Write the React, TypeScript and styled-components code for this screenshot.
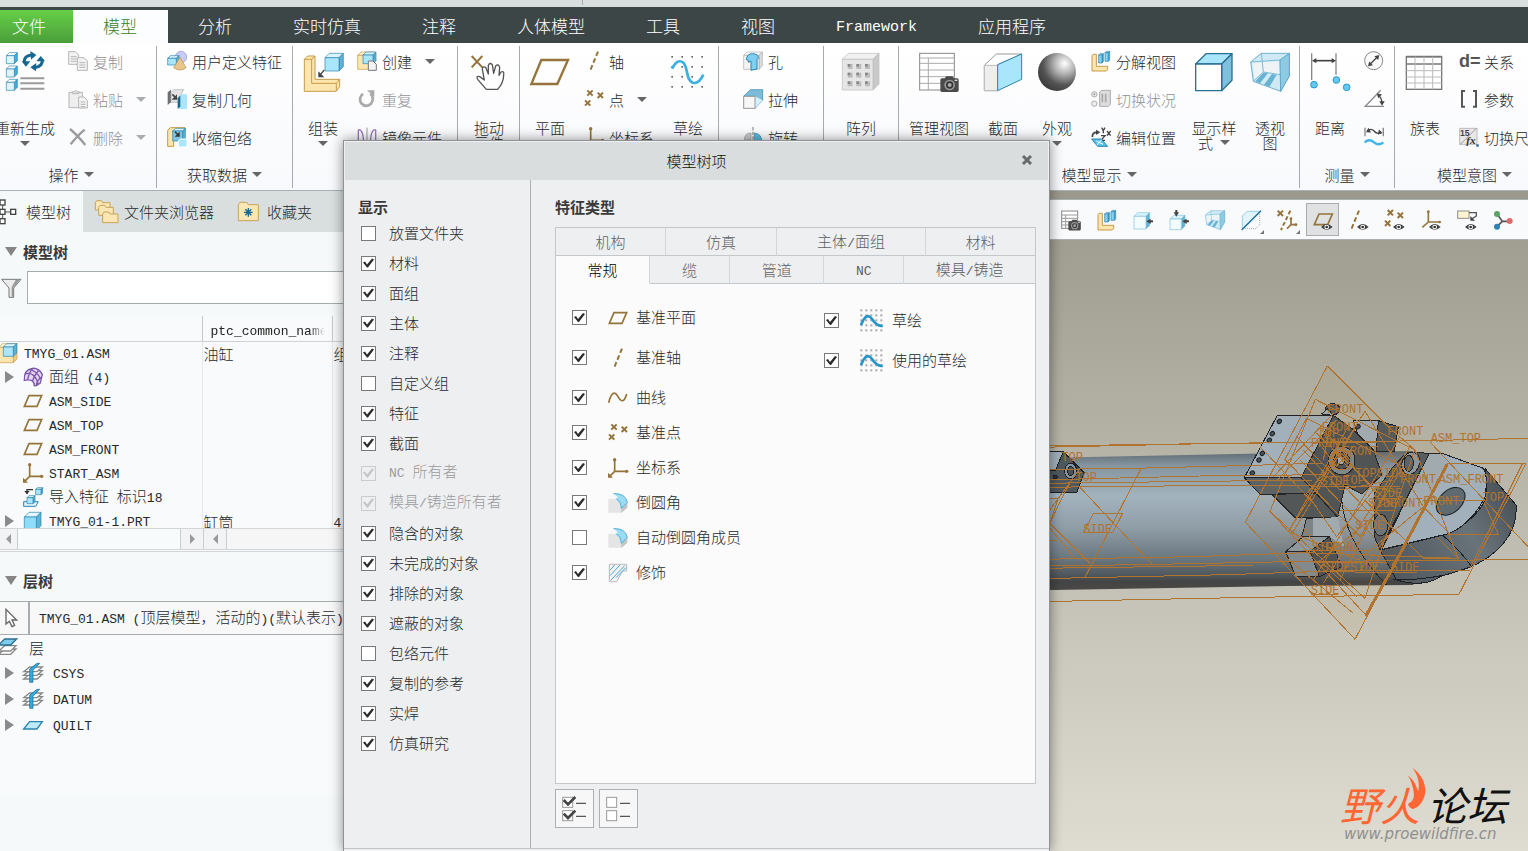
import React from 'react';
import styled, { createGlobalStyle, css } from 'styled-components';

const GlobalStyle = createGlobalStyle`
  *, *::before, *::after { box-sizing: border-box; }
  body { margin: 0; }
  body, button, input {
    font-family: 'Noto Sans CJK SC', sans-serif;
    font-size: 15px;
    font-weight: 300;
    line-height: 15px;
    color: #26292b;
  }
  button { margin: 0; padding: 0; border: 0; background: none; text-align: left; }
  h2, h3 { margin: 0; font-size: 15px; font-weight: 700; color: #3a3a3a; }
  svg { display: block; flex: none; }
`;

/* ---------- text ---------- */

const Latin = styled.span`
  font-family: 'Liberation Mono', monospace;
  font-size: 13px;
  white-space: pre;
`;

const Txt = ({ children }: { children: string }) => (
  <>
    {children.split(/([\x20-\x7e]+)/).map((part, i) =>
      i % 2 ? <Latin key={i}>{part}</Latin> : part
    )}
  </>
);

/* ---------- icons ---------- */

const TAN = '#fce6ad';
const TAN_D = '#c79a4b';
const BLUE = '#a9e6fb';
const BLUE_D = '#2b84ae';
const BROWN = '#94743a';

type BoxProps = {
  x: number; y: number; w: number; h: number; d: number;
  front?: string; top?: string; side?: string; stroke?: string; sw?: number;
};
const Box3 = ({ x, y, w, h, d, front = BLUE, top = '#d9f4fd', side = '#5fb2d6', stroke = BLUE_D, sw = 2 }: BoxProps) => (
  <g stroke={stroke} strokeWidth={sw} strokeLinejoin="round">
    <path d={`M${x} ${y + d}l${d} ${-d}h${w}l${-d} ${d}z`} fill={top} />
    <path d={`M${x + w} ${y + d}l${d} ${-d}v${h}l${-d} ${d}z`} fill={side} />
    <rect x={x} y={y + d} width={w} height={h} fill={front} />
  </g>
);

const Eye = () => (
  <g>
    <path d="M24 51Q41 33 59 51Q41 68 24 51Z" fill="#444" />
    <circle cx="41" cy="51" r="7" fill="#fff" />
    <circle cx="41" cy="51" r="4" fill="#333" />
  </g>
);
const Cross = ({ x, y, s = 8 }: { x: number; y: number; s?: number }) => (
  <path d={`M${x - s} ${y - s}l${2 * s} ${2 * s}M${x + s} ${y - s}l${-2 * s} ${2 * s}`} stroke={BROWN} strokeWidth="6" fill="none" />
);
const Page = ({ x, y, w = 30, h = 38, c = '#b5b5b5', lines = true }: { x: number; y: number; w?: number; h?: number; c?: string; lines?: boolean }) => (
  <g stroke={c} strokeWidth="3" fill="#f3f3f3">
    <path d={`M${x} ${y}h${w - 10}l10 10v${h - 10}h${-w}z`} />
    {lines && <path d={`M${x + 6} ${y + 15}h${w - 12}M${x + 6} ${y + 22}h${w - 12}M${x + 6} ${y + 29}h${w - 12}`} />}
  </g>
);
const Camera = ({ x, y, k = 1 }: { x: number; y: number; k?: number }) => (
  <g transform={`translate(${x} ${y}) scale(${k})`}>
    <path d="M0 10q0-5 5-5h8l5-6h18l5 6h9q5 0 5 5v31q0 5-5 5h-45q-5 0-5-5z" fill="#4a4a4a" />
    <circle cx="28" cy="25" r="16" fill="#999" />
    <circle cx="28" cy="25" r="11" fill="#333" />
    <circle cx="28" cy="25" r="6" fill="#aaa" />
    <path d="M43 11h8" stroke="#ddd" strokeWidth="4" />
  </g>
);
const ArrowHead = ({ x, y, r }: { x: number; y: number; r: number }) => (
  <path d="M0 0L-13 -8V8Z" fill="#444" transform={`translate(${x} ${y}) rotate(${r})`} />
);
const dots = (x0: number, y0: number, step: number, n: number, s: number, c: string) => (
  <g fill={c}>
    {Array.from({ length: n * n }, (_, k) => (
      <rect key={k} x={x0 + (k % n) * step} y={y0 + Math.floor(k / n) * step} width={s} height={s} />
    ))}
  </g>
);

const glyphs = {
  regen: (
    <>
      {[2, 42, 82].map((y) => <Box3 key={y} x={4} y={y} w={24} h={24} d={9} front="#dff5fd" top="#fff" side="#3faede" />)}
      <path d="M58 33Q56 10 82 8" fill="none" stroke="#17678f" strokeWidth="9" />
      <path d="M50 28h26l-13 16zM76 -3l18 12l-16 14z" fill="#17678f" />
      <path d="M112 22Q114 44 88 47" fill="none" stroke="#17678f" strokeWidth="9" />
      <path d="M94 28h26l-13-16zM94 33l-18 13l17 12z" fill="#17678f" />
      <path d="M46 79h72M46 94h72M46 110h72" stroke="#9a9a9a" strokeWidth="6" />
    </>
  ),
  copy: <><Page x={2} y={2} /><Page x={28} y={20} /></>,
  paste: (
    <>
      <path d="M3 10h40v46H3z" fill="#eee" stroke="#b5b5b5" strokeWidth="3" />
      <path d="M13 14V8h6q4-8 8 0h6v6z" fill="#ddd" stroke="#aaa" strokeWidth="2" />
      <Page x={32} y={24} w={26} h={33} />
    </>
  ),
  del: <path d="M6 6q22 18 46 48M50 8Q30 24 8 52" stroke="#9b9b9b" strokeWidth="7" fill="none" />,
  udf: (
    <>
      <circle cx="42" cy="18" r="17" fill="#c9cdf3" stroke="#8b8fd0" strokeWidth="2" />
      <Box3 x={2} y={14} w={26} h={20} d={8} />
      <path d="M39 19L57 50Q40 64 20 50Z" fill="#e9c68c" stroke="#b58a45" strokeWidth="2" />
    </>
  ),
  copygeom: (
    <>
      <path d="M2 10l10-8v38l-10 8z" fill="#6b7074" />
      <path d="M12 10l8-8h30l-6 10v28H12z" fill="#e4e4e4" stroke="#aaa" strokeWidth="2" />
      <path d="M16 16l12 12" stroke="#444" strokeWidth="5" /><path d="M30 16v16H14z" fill="#444" />
      <path d="M34 24l8-8h18v44H34z" fill={BLUE} /><path d="M32 28l8-9v34l-8 6z" fill="#17678f" />
    </>
  ),
  shrink: (
    <>
      <path d="M2 10l8-8h44v12H20v44H2z" fill={TAN} stroke={TAN_D} strokeWidth="3" />
      <Box3 x={17} y={4} w={30} h={30} d={8} front="#7fc4e2" />
      <path d="M24 14l12 12" stroke="#333" strokeWidth="4" /><path d="M38 14v15H23z" fill="#333" />
      <path d="M34 42l6-6h20v24H34z" fill={BLUE} stroke="#fff" strokeWidth="3" />
    </>
  ),
  assemble: (
    <>
      <path d="M4 22l10-10h22v70h74v22l-10 14H4z" fill={TAN} stroke={TAN_D} strokeWidth="3" />
      <path d="M4 22h22l10-10M26 22v72h74l10-12M100 94v22" fill="none" stroke={TAN_D} strokeWidth="3" />
      <Box3 x={66} y={4} w={42} h={40} d={13} />
      <path d="M64 54L50 70" stroke="#444" strokeWidth="4" /><path d="M46 58v18h18z" fill="#444" />
    </>
  ),
  create: (
    <>
      <Box3 x={2} y={3} w={40} h={42} d={10} front={TAN} top="#fff3d0" side="#eac981" stroke={TAN_D} />
      <Box3 x={18} y={3} w={30} h={26} d={9} />
      <Page x={34} y={30} w={24} h={28} c="#777" lines={false} />
    </>
  ),
  repeat: (
    <>
      <path d="M18 14Q4 26 12 42Q26 58 42 44Q54 26 40 14" fill="none" stroke="#aaa" strokeWidth="8" />
      <path d="M30 4h22v20z" fill="#aaa" />
    </>
  ),
  mirror: (
    <>
      <path d="M30 2v56" stroke="#999" strokeWidth="3" />
      <path d="M4 8Q20 6 20 56M56 8Q40 6 40 56M4 8v50M56 8v50" fill="none" stroke="#9a78bd" strokeWidth="4" />
    </>
  ),
  drag: (
    <>
      <path d="M8 12l32 34M40 12L8 46" stroke={BROWN} strokeWidth="6" />
      <path d="M52 112L26 82Q20 70 32 74L46 84L40 52Q40 42 50 46L58 66L58 40Q62 30 70 38L74 64L80 42Q88 34 92 46L90 70L96 60Q106 56 104 68Q104 92 86 112Z" fill="#fff" stroke="#555" strokeWidth="4" strokeLinejoin="round" />
    </>
  ),
  planeBig: <path d="M34 24H114L82 96H4Z" fill="none" stroke={BROWN} strokeWidth="7" />,
  axis: <path d="M42 2L18 60" stroke={BROWN} strokeWidth="6" strokeDasharray="14 8" />,
  points: <><Cross x={18} y={12} /><Cross x={49} y={19} /><Cross x={11} y={42} /></>,
  csys: (
    <>
      <path d="M20 4V40H56M20 40L4 56" fill="none" stroke={BROWN} strokeWidth="5" />
      <circle cx="20" cy="5" r="5" fill={BROWN} /><circle cx="56" cy="40" r="5" fill={BROWN} /><path d="M0 44v15h15z" fill={BROWN} />
    </>
  ),
  sketchBig: (
    <>
      {dots(10, 12, 30, 4, 5, '#666')}
      <path d="M12 50Q28 18 46 32C62 50 52 82 74 92Q92 98 106 68" fill="none" stroke="#3cb0e2" strokeWidth="8" />
    </>
  ),
  hole: (
    <>
      <Box3 x={2} y={3} w={46} h={42} d={10} front="#f3f3f3" top="#fff" side="#ddd" stroke="#aaa" />
      <path d="M10 26Q12 8 28 8Q46 8 46 22L42 26V54L24 58V30L16 34V28Z" fill="#7fd0f0" stroke={BLUE_D} strokeWidth="3" />
    </>
  ),
  extrude: (
    <>
      <path d="M2 22L22 2H59V34L36 58V22Z" fill="#7cbcd9" stroke={BLUE_D} strokeWidth="2" />
      <path d="M59 34L36 58V22Z" fill="#d5f0fa" />
      <rect x="2" y="22" width="34" height="36" fill="#f7f7f7" stroke="#999" strokeWidth="3" />
    </>
  ),
  revolve: (
    <>
      <path d="M30 0v60" stroke="#777" strokeWidth="3" strokeDasharray="10 4" />
      <path d="M4 40Q4 18 24 18v20z" fill="#ccc" stroke="#999" strokeWidth="2" />
      <path d="M34 18Q58 20 56 48L34 40Z" fill="#58bde5" stroke={BLUE_D} strokeWidth="2" />
    </>
  ),
  pattern: (
    <>
      <Box3 x={4} y={4} w={92} h={92} d={18} front="#e6e6e6" top="#f1f1f1" side="#c9c9c9" stroke="#bbb" />
      {dots(20, 36, 26, 3, 15, '#bdbdbd')}
      {dots(20, 36, 26, 3, 8, '#888')}
    </>
  ),
  manage: (
    <>
      <rect x="2" y="4" width="104" height="110" fill="#fff" stroke="#888" strokeWidth="3" />
      <path d="M2 18h104M2 34h104M2 54h104M2 74h104M2 94h104M28 18v96" stroke="#aaa" strokeWidth="3" />
      <Camera x={64} y={74} />
    </>
  ),
  manageSmall: (
    <>
      <rect x="2" y="3" width="48" height="52" fill="#fff" stroke="#888" strokeWidth="3" />
      <path d="M2 15h48M2 25h48M2 35h48M2 45h48M14 15v40" stroke="#999" strokeWidth="3" />
      <Camera x={22} y={30} k={0.68} />
    </>
  ),
  section: (
    <>
      <path d="M4 40L40 6H116L44 38V116H4Z" fill="#fff" stroke="#999" strokeWidth="3" />
      <path d="M4 40H44V116H4Z" fill="#eee" stroke="#bbb" strokeWidth="3" />
      <path d="M44 38L116 6V82L44 116Z" fill={BLUE} stroke={BLUE_D} strokeWidth="3" />
    </>
  ),
  sphere: <circle cx="60" cy="60" r="57" fill="url(#ball)" />,
  explode: (
    <>
      <path d="M3 14l3-4h10v36h34v10l-4 4H3z" fill={TAN} stroke={TAN_D} strokeWidth="3" />
      <Box3 x={23} y={8} w={10} h={24} d={4} front="#7fd3f3" /><Box3 x={42} y={1} w={10} h={26} d={4} front="#7fd3f3" />
    </>
  ),
  toggle: (
    <>
      <g fill="#eee" stroke="#aaa" strokeWidth="3"><circle cx="10" cy="16" r="8" /><circle cx="10" cy="44" r="8" /><path d="M26 10l6-6h26v42l-6 6H26z" fill="#ddd" /><path d="M34 14v26M44 14v26" strokeWidth="5" /></g>
      <circle cx="10" cy="16" r="3" fill="#999" />
    </>
  ),
  editpos: (
    <>
      <path d="M4 30Q4 16 16 16" fill="none" stroke="#444" strokeWidth="5" /><ArrowHead x={28} y={16} r={0} />
      <path d="M32 2l5 9l5-9M37 11v8M48 12l11 14M59 12l-11 14M30 26h12l-12 14h12" fill="none" stroke="#444" strokeWidth="4" />
      <path d="M2 36H30L50 58H20Z" fill="#54c3ef" stroke={BLUE_D} strokeWidth="3" /><path d="M16 42l20 10M32 38L18 54" stroke="#fff" strokeWidth="3" />
    </>
  ),
  display: <Box3 x={5} y={5} w={78} h={80} d={31} front="#fff" top={BLUE} side="#7fc0dc" stroke="#2a7196" sw={4} />,
  persp: (
    <>
      <path d="M2 30L34 4H118V72L92 118L10 88Z" fill="#cfeaf5" stroke="#6db0cd" strokeWidth="3" />
      <path d="M8 32L90 28V70L42 60L14 84Z" fill="#eef3f6" />
      <path d="M34 4L40 60L10 88M40 60L116 72M92 118L90 24L118 4M2 30L90 24" fill="none" stroke="#7bbbd6" strokeWidth="3" />
      <path d="M90 24L118 4V72L92 118Z" fill="#8ecbe3" stroke="#4b9cbf" strokeWidth="2" />
      <path d="M40 62L16 88L30 94L54 64ZM66 66L42 98L58 105L80 68Z" fill="#69b3d2" />
    </>
  ),
  distance: (
    <>
      <path d="M5 4V84M78 4V68" stroke="#888" strokeWidth="4" />
      <path d="M12 26H72" stroke="#444" strokeWidth="5" /><ArrowHead x={78} y={26} r={0} /><ArrowHead x={6} y={26} r={180} />
      <g fill="#63c8f2" stroke="#2998c9" strokeWidth="3"><circle cx="12" cy="98" r="10" /><circle cx="79" cy="84" r="10" /><circle cx="110" cy="106" r="10" /></g>
    </>
  ),
  diameter: (
    <>
      <circle cx="29" cy="29" r="27" fill="#fafafa" stroke="#888" strokeWidth="3" />
      <path d="M18 40L40 18" stroke="#444" strokeWidth="4" /><ArrowHead x={46} y={12} r={-45} /><ArrowHead x={12} y={46} r={135} />
    </>
  ),
  angle: (
    <>
      <path d="M50 4L4 52H60" fill="none" stroke="#888" strokeWidth="4" />
      <path d="M42 18Q54 26 54 44" fill="none" stroke="#444" strokeWidth="4" /><ArrowHead x={39} y={13} r={225} /><ArrowHead x={54} y={50} r={90} />
    </>
  ),
  curveMeas: (
    <>
      <path d="M3 2V28M58 2V28" stroke="#888" strokeWidth="4" />
      <path d="M10 12Q22 2 30 12T50 18" fill="none" stroke="#444" strokeWidth="4" /><ArrowHead x={6} y={16} r={150} /><ArrowHead x={56} y={18} r={10} />
      <path d="M2 46Q16 34 30 46T58 46" fill="none" stroke="#3fb5e8" strokeWidth="7" />
    </>
  ),
  family: (
    <>
      <rect x="4" y="14" width="106" height="98" fill="#fff" stroke="#777" strokeWidth="4" />
      <path d="M4 36h106M4 14h106" stroke="#777" strokeWidth="5" />
      <path d="M4 56h106M4 75h106M4 93h106M30 14v98M57 14v98M83 14v98" stroke="#bbb" strokeWidth="3" />
    </>
  ),
  relation: <text x="0" y="48" fontFamily="Liberation Sans" fontWeight="700" fontSize="54" fill="#555">d=</text>,
  params: <path d="M18 6H9V53H18M42 6H51V53H42" fill="none" stroke="#555" strokeWidth="6" />,
  toggledim: (
    <>
      <path d="M2 4H54V52H2Z" fill="#e8e8e8" stroke="#bbb" strokeWidth="3" /><path d="M4 52L52 4" stroke="#999" strokeWidth="3" />
      <text x="3" y="26" fontFamily="Liberation Sans" fontSize="26" fontWeight="700" fill="#444">15</text>
      <text x="22" y="52" fontFamily="Liberation Serif" fontStyle="italic" fontWeight="700" fontSize="34" fill="#333">fx</text>
      <rect x="52" y="52" width="7" height="7" fill="#17678f" />
    </>
  ),
  cubeIn: <><Box3 x={3} y={8} w={36} h={38} d={11} front="#f2fbfe" stroke="#7fc2dd" /><path d="M46 34h14" stroke="#444" strokeWidth="6" /><ArrowHead x={40} y={34} r={180} /></>,
  cubeIn2: (
    <>
      <Box3 x={3} y={16} w={34} h={32} d={11} front="#f2fbfe" stroke="#7fc2dd" />
      <path d="M46 34h14M22 0v12" stroke="#444" strokeWidth="6" /><ArrowHead x={40} y={34} r={180} /><ArrowHead x={22} y={20} r={90} />
    </>
  ),
  sectionDash: (
    <>
      <path d="M4 56V18L18 4H56Z" fill="#dff4fc" stroke="#9cd0e4" strokeWidth="3" />
      <path d="M56 6V44L44 56H8" fill="none" stroke="#aaa" strokeWidth="3" strokeDasharray="3 3" />
      <path d="M2 60L60 2" stroke="#1f6f96" strokeWidth="4" />
    </>
  ),
  datumFilter: (
    <>
      <Cross x={10} y={10} /><path d="M40 2L12 60" stroke={BROWN} strokeWidth="6" strokeDasharray="12 7" />
      <path d="M42 26V44H58M42 44L30 56" fill="none" stroke={BROWN} strokeWidth="5" /><circle cx="42" cy="26" r="4" fill={BROWN} /><circle cx="57" cy="44" r="4" fill={BROWN} />
    </>
  ),
  planeEye: <><path d="M18 12H58L44 44H4Z" fill="none" stroke={BROWN} strokeWidth="5" /><Eye /></>,
  axisEye: <><path d="M30 2L6 60" stroke={BROWN} strokeWidth="6" strokeDasharray="14 8" /><Eye /></>,
  pointsEye: <><Cross x={16} y={8} /><Cross x={46} y={16} /><Cross x={8} y={40} /><Eye /></>,
  csysEye: (
    <>
      <path d="M22 4V36H54M22 36L4 52" fill="none" stroke={BROWN} strokeWidth="5" /><circle cx="22" cy="5" r="4" fill={BROWN} /><circle cx="56" cy="36" r="4" fill={BROWN} /><Eye />
    </>
  ),
  noteEye: (
    <>
      <rect x="2" y="3" width="34" height="22" fill="#fff4cf" stroke="#8d8d8d" strokeWidth="3" />
      <path d="M36 8h22v10l-12 8" fill="none" stroke="#555" strokeWidth="4" /><path d="M40 18v14h14z" fill="#444" /><Eye />
    </>
  ),
  spin: (
    <>
      <path d="M12 12L28 34L12 50M28 34H50" fill="none" stroke="#555" strokeWidth="5" />
      <circle cx="12" cy="12" r="9" fill="#5aa564" /><circle cx="12" cy="50" r="9" fill="#2f82b5" /><circle cx="50" cy="33" r="9" fill="#e0696b" />
    </>
  ),
  treeIcon: (
    <>
      <path d="M8 0v60M8 30h26" stroke="#555" strokeWidth="3" />
      <g fill="#fff" stroke="#444" strokeWidth="4"><rect x="0" y="-6" width="15" height="15" /><rect x="0" y="22" width="15" height="15" /><rect x="0" y="50" width="15" height="15" /><rect x="32" y="22" width="15" height="15" /></g>
    </>
  ),
  folders: (
    <g fill="#fbe7b4" stroke="#c9a25a" strokeWidth="3">
      <path d="M4 30V8l4-6h14l4 6h22v22z" /><path d="M14 46V22l4-6h14l4 6h22v24z" /><path d="M26 68V42l4-6h14l4 6h24v26z" />
    </g>
  ),
  favFolder: (
    <>
      <path d="M4 62V14l5-7h20l5 7h30v48z" fill="#fbe7b4" stroke="#c9a25a" strokeWidth="3" />
      <path d="M34 24v26M21 37h26M25 28l18 18M43 28L25 46" stroke="#17678f" strokeWidth="4" />
    </>
  ),
  funnel: (
    <>
      <path d="M2 4H60L38 30V58H24V30Z" fill="#ececec" stroke="#777" strokeWidth="3" /><path d="M44 6h12L36 30v26h-4V28z" fill="#999" />
    </>
  ),
  asm: (
    <>
      <Box3 x={2} y={2} w={44} h={46} d={11} front={TAN} top="#fff3d0" side="#eac981" stroke={TAN_D} />
      <Box3 x={16} y={2} w={30} h={28} d={10} />
    </>
  ),
  quilt: (
    <path d="M4 40Q2 8 28 4Q46 2 58 22L52 48Q40 58 34 56Q34 34 4 40ZM4 22Q34 10 46 52M16 8Q42 10 52 36M14 38Q18 16 30 4M28 44Q34 24 46 12M40 54Q42 40 56 30" fill="#e4d8f1" stroke="#7e57a8" strokeWidth="4" />
  ),
  planeS: <path d="M18 14H56L42 46H4Z" fill="none" stroke={BROWN} strokeWidth="5" />,
  importIcon: (
    <>
      <Box3 x={38} y={2} w={16} h={16} d={5} /><path d="M30 8H12v12" fill="none" stroke="#333" strokeWidth="4" /><path d="M4 12h16l-8 10z" fill="#333" />
      <path d="M2 44H46L38 58H2Z" fill="#e2f5fc" stroke={BLUE_D} strokeWidth="3" /><Box3 x={12} y={26} w={18} h={18} d={6} />
    </>
  ),
  part: <Box3 x={4} y={4} w={36} h={40} d={14} front="#8fdcf8" top="#e2f7fe" side="#5bb3d8" />,
  cursor: <path d="M12 4V48L22 40L30 56L38 52L30 36H44Z" fill="#fff" stroke="#666" strokeWidth="4" />,
  layers: (
    <>
      {[22, 12].map((y) => <path key={y} d={`M2 ${y + 30}L20 ${y + 14}H54L38 ${y + 30}Z`} fill="#fff" stroke="#888" strokeWidth="4" />)}
      <path d="M2 24L20 6H56L38 24Z" fill="#7fcdee" stroke="#2b6e8e" strokeWidth="4" />
    </>
  ),
  layerItem: (
    <>
      {[28, 17, 6].map((y) => <path key={y} d={`M2 ${y + 20}L20 ${y + 6}H58L42 ${y + 20}Z`} fill="#fff" stroke="#888" strokeWidth="4" />)}
      <path d="M20 18L42 1H50L30 22V58H20Z" fill="#33a9e0" stroke="#17678f" strokeWidth="2" />
    </>
  ),
  layerPlane: <path d="M2 42L20 20H58L42 42Z" fill="#bfeafb" stroke="#2b84ae" strokeWidth="4" />,
  curve: <path d="M2 44Q14 -2 30 26T56 18" fill="none" stroke={BROWN} strokeWidth="5" />,
  sketch: (
    <>
      {dots(1, 1, 15, 5, 6, '#a9a9a9')}
      <path d="M3 48Q20 6 36 30T68 50" fill="none" stroke="#2795c8" strokeWidth="8" />
    </>
  ),
  round: (
    <>
      <path d="M1 18Q38 14 40 44L58 30V44L42 59H1Z" fill="#e5e5e5" /><path d="M40 44V59L58 44V28Z" fill="#c4c4c4" />
      <path d="M1 18Q38 14 40 46L58 28Q52 0 16 2L24 8Z" fill="#9bdcf5" /><path d="M16 2Q52 0 58 28L40 46Q39 26 26 19" fill="none" stroke="#4fb0d4" strokeWidth="3" /><path d="M1 18L16 2L30 12L22 18Z" fill="#f7f7f7" />
    </>
  ),
  cosmetic: (
    <>
      <path d="M4 4H56V24H44L26 56H4Z" fill="#f3f3f3" stroke="#bbb" strokeWidth="3" />
      <path d="M6 22L20 6M6 38L36 6M8 52L50 8M24 44L54 14" stroke="#4ba6cf" strokeWidth="3" />
    </>
  ),
  checkAll: (
    <>
      <g fill="#fff" stroke="#999" strokeWidth="3"><rect x="2" y="4" width="30" height="30" /><rect x="2" y="44" width="30" height="30" /></g>
      <path d="M42 22h30M42 61h30" stroke="#555" strokeWidth="4" /><path d="M5 12l13 13L40 3M5 53l13 13L40 44" fill="none" stroke="#444" strokeWidth="8" />
    </>
  ),
  uncheckAll: (
    <>
      <g fill="#fff" stroke="#999" strokeWidth="3"><rect x="2" y="4" width="30" height="30" /><rect x="2" y="44" width="30" height="30" /></g>
      <path d="M42 22h30M42 61h30" stroke="#555" strokeWidth="4" />
    </>
  ),
};
type IconName = keyof typeof glyphs;

/* `size` is the drawn size, `grid` the side of the square the glyph is drawn in */
const Icon = ({ name, size = 20, grid = 60 }: { name: IconName; size?: number; grid?: number }) => (
  <svg width={size} height={size} viewBox={`0 0 ${grid} ${grid}`} fill="none" aria-hidden="true" overflow="visible">
    {glyphs[name]}
  </svg>
);

const Caret = styled.span<{ $dim?: boolean }>`
  display: inline-block;
  flex: none;
  border: 5px solid transparent;
  border-bottom-width: 0;
  border-top-color: ${(p) => (p.$dim ? '#aaadaf' : '#666')};
`;

/* ---------- shell and ribbon ---------- */

const Shell = styled.div`
  position: relative;
  display: flex;
  flex-direction: column;
  height: 100vh;
  overflow: hidden;
  background: #f9fafc;
`;
const TopStrip = styled.div`
  display: flex;
  flex: none;
  height: 7px;
  padding-left: 582px;
  background: #d9dfdf;
  &::after { content: ''; width: 1px; height: 5px; background: #aaa; }
`;
const TabBar = styled.nav`
  display: flex;
  flex: none;
  height: 36px;
  padding-top: 3px;
  background: #3d4647;
`;
const RibbonTab = styled.button<{ $kind?: 'file' | 'active' }>`
  flex: none;
  padding: 0 31px 2px 30px;
  font-size: 17px;
  line-height: 17px;
  color: #fff;
  ${Latin} { font-size: 15px; }
  ${(p) => p.$kind === 'file' && css`padding: 0 27px 2px 12px; background: linear-gradient(#65cf47, #4a9e3a);`}
  ${(p) => p.$kind === 'active' && css`background: #fcfdfe; color: #3c8025;`}
`;
const Ribbon = styled.div`
  display: flex;
  flex: none;
  height: 148px;
  overflow: hidden;
  background: linear-gradient(#fff, #f8f9fc);
  border-bottom: 1px solid #a9b3b6;
`;
const Group = styled.section<{ $w: number; $start?: number }>`
  display: flex;
  flex: none;
  flex-direction: column;
  width: ${(p) => p.$w}px;
  height: 142px;
  margin-top: 3px;
  padding-left: ${(p) => p.$start ?? 0}px;
  border-right: 1px solid #a6abad;
`;
const Tools = styled.div`
  display: flex;
  height: 118px;
  margin-top: -3px;
`;
const GroupLabel = styled.button<{ $shift?: number }>`
  display: flex;
  align-items: center;
  justify-content: center;
  gap: 5px;
  height: 27px;
  margin-left: -${(p) => p.$shift ?? 0}px;
`;
const Big = styled.button<{ $w?: number }>`
  display: flex;
  flex: none;
  flex-direction: column;
  align-items: center;
  width: ${(p) => p.$w ?? 60}px;
  padding-top: 9px;
  text-align: center;
  white-space: nowrap;
  svg { margin-bottom: 28px; }
  > ${Caret} { margin-top: 6px; }
`;
const Stack = styled.div<{ $w?: number; $start?: number }>`
  display: flex;
  flex: none;
  flex-direction: column;
  width: ${(p) => (p.$w ? `${p.$w}px` : 'auto')};
  padding-left: ${(p) => p.$start ?? 0}px;
`;
const Small = styled.button<{ $dim?: boolean }>`
  display: flex;
  align-items: center;
  gap: 5px;
  height: 38px;
  padding-bottom: 2px;
  white-space: nowrap;
  color: ${(p) => (p.$dim ? '#8f9294' : '#26292b')};
  ${Caret} { margin-left: 8px; }
`;
const MenuLine = styled.span`
  display: flex;
  align-items: center;
  gap: 7px;
`;

const SmallTool = ({ icon, label, dim, menu, bare }: { icon: IconName; label: string; dim?: boolean; menu?: boolean; bare?: boolean }) => (
  <Small $dim={dim} disabled={dim} aria-label={label}>
    <Icon name={icon} />
    {!bare && label}
    {menu && <Caret $dim={dim} />}
  </Small>
);
const BigTool = ({ icon, lines, w, menu }: { icon: IconName; lines: string[]; w?: number; menu?: boolean }) => (
  <Big $w={w}>
    <Icon name={icon} size={40} grid={120} />
    <span>{lines[0]}</span>
    {lines[1] && <MenuLine>{lines[1]}{menu && <Caret />}</MenuLine>}
    {menu && !lines[1] && <Caret />}
  </Big>
);

const RibbonBar = () => (
  <Ribbon>
    <Group $w={157}>
      <Tools>
        <BigTool icon="regen" lines={['重新生成']} w={50} menu />
        <Stack $start={18}>
          <SmallTool icon="copy" label="复制" dim />
          <SmallTool icon="paste" label="粘贴" dim menu />
          <SmallTool icon="del" label="删除" dim menu />
        </Stack>
      </Tools>
      <GroupLabel $shift={14}>操作<Caret /></GroupLabel>
    </Group>
    <Group $w={136} $start={10}>
      <Tools>
        <Stack>
          <SmallTool icon="udf" label="用户定义特征" />
          <SmallTool icon="copygeom" label="复制几何" />
          <SmallTool icon="shrink" label="收缩包络" />
        </Stack>
      </Tools>
      <GroupLabel $shift={10}>获取数据<Caret /></GroupLabel>
    </Group>
    <Group $w={165}>
      <Tools>
        <BigTool icon="assemble" lines={['组装']} menu />
        <Stack $start={4}>
          <SmallTool icon="create" label="创建" menu />
          <SmallTool icon="repeat" label="重复" dim />
          <SmallTool icon="mirror" label="镜像元件" />
        </Stack>
      </Tools>
    </Group>
    <Group $w={62}>
      <Tools><BigTool icon="drag" lines={['拖动', '元件']} w={62} /></Tools>
    </Group>
    <Group $w={199}>
      <Tools>
        <BigTool icon="planeBig" lines={['平面']} />
        <Stack $w={78} $start={4}>
          <SmallTool icon="axis" label="轴" />
          <SmallTool icon="points" label="点" menu />
          <SmallTool icon="csys" label="坐标系" />
        </Stack>
        <BigTool icon="sketchBig" lines={['草绘']} />
      </Tools>
    </Group>
    <Group $w={105} $start={24}>
      <Tools>
        <Stack>
          <SmallTool icon="hole" label="孔" />
          <SmallTool icon="extrude" label="拉伸" />
          <SmallTool icon="revolve" label="旋转" />
        </Stack>
      </Tools>
    </Group>
    <Group $w={75}>
      <Tools><BigTool icon="pattern" lines={['阵列']} w={74} /></Tools>
    </Group>
    <Group $w={401}>
      <Tools>
        <BigTool icon="manage" lines={['管理视图']} w={80} />
        <BigTool icon="section" lines={['截面']} w={48} />
        <BigTool icon="sphere" lines={['外观']} menu />
        <Stack $w={97} $start={4}>
          <SmallTool icon="explode" label="分解视图" />
          <SmallTool icon="toggle" label="切换状况" dim />
          <SmallTool icon="editpos" label="编辑位置" />
        </Stack>
        <BigTool icon="display" lines={['显示样', '式']} menu />
        <BigTool icon="persp" lines={['透视', '图']} w={52} />
      </Tools>
      <GroupLabel>模型显示<Caret /></GroupLabel>
    </Group>
    <Group $w={95}>
      <Tools>
        <BigTool icon="distance" lines={['距离']} />
        <Stack $start={4}>
          <SmallTool icon="diameter" label="直径" bare />
          <SmallTool icon="angle" label="角度" bare />
          <SmallTool icon="curveMeas" label="长度" bare />
        </Stack>
      </Tools>
      <GroupLabel>测量<Caret /></GroupLabel>
    </Group>
    <Group $w={160}>
      <Tools>
        <BigTool icon="family" lines={['族表']} />
        <Stack $start={4}>
          <SmallTool icon="relation" label="关系" />
          <SmallTool icon="params" label="参数" />
          <SmallTool icon="toggledim" label="切换尺寸" />
        </Stack>
      </Tools>
      <GroupLabel>模型意图<Caret /></GroupLabel>
    </Group>
  </Ribbon>
);

/* ---------- left panel ---------- */

const Body = styled.div`
  display: flex;
  flex: 1;
  min-height: 0;
`;
const Side = styled.aside`
  display: flex;
  flex: none;
  flex-direction: column;
  width: 420px;
  background: #f5f9fa;
`;
const SideTabs = styled.div`
  display: flex;
  flex: none;
  height: 41px;
  background: #d9dfdf;
`;
const SideTab = styled.button<{ $active?: boolean }>`
  display: flex;
  align-items: center;
  gap: 6px;
  padding: 0 12px 0 ${(p) => (p.$active ? 0 : 11)}px;
  background: ${(p) => (p.$active ? '#f5f9fa' : 'transparent')};
`;
const SideTitle = styled.h2<{ $h: number; $drop?: number }>`
  display: flex;
  flex: none;
  align-items: center;
  gap: 6px;
  height: ${(p) => p.$h}px;
  padding: ${(p) => p.$drop ?? 0}px 0 0 5px;
  ${Caret} { border-width: 9px 6px 0; border-top-color: #858585; }
`;
const FilterRow = styled.label`
  display: flex;
  flex: none;
  align-items: center;
  gap: 6px;
  padding-left: 1px;
  height: 33px;
`;
const FilterInput = styled.input`
  flex: 1;
  height: 33px;
  border: 1px solid #a3adae;
  background: #fff;
`;
const TableClip = styled.div`
  flex: none;
  height: 212px;
  margin-top: 12px;
  overflow: hidden;
  background: #f9fafb;
`;
const Tree = styled.table`
  width: 100%;
  border-collapse: collapse;
  table-layout: fixed;
  th, td { padding: 0; font-weight: 300; text-align: left; white-space: nowrap; overflow: hidden; }
  th { height: 25px; border-bottom: 1px solid #cdd2d4; vertical-align: bottom; padding: 0 8px 2px; color: #222; }
  th + th { border-left: 1px solid #c3c8ca; }
  td { height: 24px; }
  td + td { border-left: 1px solid #e6e9eb; padding-left: 1px; }
`;
const Fade = styled.div`
  overflow: hidden;
  width: 114px;
  mask-image: linear-gradient(90deg, #000 86%, transparent);
`;
const NodeCell = styled.div<{ $level: number; $gap?: number; $h?: number }>`
  display: flex;
  align-items: center;
  gap: ${(p) => p.$gap ?? 6}px;
  height: ${(p) => p.$h ?? 24}px;
  padding: 0 0 2px ${(p) => (p.$level ? 5 : 0)}px;
  margin-left: ${(p) => (p.$level ? 0 : -2)}px;
`;
const Twisty = styled.span<{ $hidden?: boolean }>`
  width: 12px;
  flex: none;
  border: 6px solid transparent;
  border-left: 9px solid ${(p) => (p.$hidden ? 'transparent' : '#8a8a8a')};
  border-right: 0;
`;
const ScrollRow = styled.div`
  display: flex;
  flex: none;
  height: 22px;
  border-top: 1px solid #d2d6d8;
  border-bottom: 1px solid #d2d6d8;
  background: #f7fbfc;
`;
const ScrollBtn = styled.button<{ $w: number; $dir: 'left' | 'right' }>`
  display: flex;
  flex: none;
  align-items: center;
  justify-content: center;
  width: ${(p) => p.$w}px;
  background: #f2f3f4;
  border: solid #c9cdcf;
  border-width: 0 1px 0 0;
  &::before {
    content: '';
    border: 5px solid transparent;
    border-${(p) => p.$dir}-width: 0;
    border-${(p) => (p.$dir === 'left' ? 'right' : 'left')}-color: #9a9a9a;
  }
`;
const ScrollTrack = styled.div<{ $w?: number }>`
  flex: ${(p) => (p.$w ? `none` : '1')};
  width: ${(p) => p.$w ?? 0}px;
  border-right: 1px solid #c9cdcf;
  background: ${(p) => (p.$w ? 'transparent' : '#f6f6f7')};
`;
const LayerPanel = styled.div`
  flex: 1;
  margin-top: 1px;
  border-top: 1px solid #d2d6d8;
`;
const LayerBar = styled.div`
  display: flex;
  height: 34px;
  border: solid #a8acae;
  border-width: 1px 0;
  background: #f8f8f8;
`;
const PickButton = styled.button`
  width: 30px;
  padding-left: 2px;
  border-right: 2px solid #a8acae;
`;
const ModelPicker = styled.button`
  flex: 1;
  padding-left: 9px;
  overflow: hidden;
  white-space: nowrap;
`;
const LayerList = styled.ul`
  height: 160px;
  margin: 0;
  padding: 0;
  list-style: none;
  background: #f9fafc;
`;
const LayerIcon = styled.span`
  margin-left: -4px;
`;

const nodes: { icon: IconName; label: string; level: number; open?: boolean; name?: string; kind?: string }[] = [
  { icon: 'asm', label: 'TMYG_01.ASM', level: 0, name: '油缸', kind: '组' },
  { icon: 'quilt', label: '面组 (4)', level: 1, open: true },
  { icon: 'planeS', label: 'ASM_SIDE', level: 1 },
  { icon: 'planeS', label: 'ASM_TOP', level: 1 },
  { icon: 'planeS', label: 'ASM_FRONT', level: 1 },
  { icon: 'csys', label: 'START_ASM', level: 1 },
  { icon: 'importIcon', label: '导入特征 标识18', level: 1 },
  { icon: 'part', label: 'TMYG_01-1.PRT', level: 1, open: true, name: '缸筒', kind: '4' },
];
const layers: { icon: IconName; label: string }[] = [
  { icon: 'layerItem', label: 'CSYS' },
  { icon: 'layerItem', label: 'DATUM' },
  { icon: 'layerPlane', label: 'QUILT' },
];

const SidePanel = () => (
  <Side>
    <SideTabs>
      <SideTab $active><Icon name="treeIcon" />模型树</SideTab>
      <SideTab><Icon name="folders" size={24} grid={72} />文件夹浏览器</SideTab>
      <SideTab><Icon name="favFolder" size={24} grid={72} />收藏夹</SideTab>
    </SideTabs>
    <SideTitle $h={39}><Caret />模型树</SideTitle>
    <FilterRow><Icon name="funnel" /><FilterInput aria-label="筛选" /></FilterRow>
    <TableClip>
      <Tree>
        <colgroup><col width="202" /><col width="130" /><col /></colgroup>
        <thead><tr><th /><th><Fade><Txt>ptc_common_name</Txt></Fade></th><th /></tr></thead>
        <tbody>
          {nodes.map((n) => (
            <tr key={n.label}>
              <td>
                <NodeCell $level={n.level}>
                  {n.level > 0 && <Twisty $hidden={!n.open} />}
                  <Icon name={n.icon} />
                  <span><Txt>{n.label}</Txt></span>
                </NodeCell>
              </td>
              <td>{n.name}</td>
              <td>{n.kind && <Txt>{n.kind}</Txt>}</td>
            </tr>
          ))}
        </tbody>
      </Tree>
    </TableClip>
    <ScrollRow>
      <ScrollBtn $w={18} $dir="left" aria-label="向左" />
      <ScrollTrack $w={163} />
      <ScrollBtn $w={23} $dir="right" aria-label="向右" />
      <ScrollBtn $w={23} $dir="left" aria-label="向左" />
      <ScrollTrack />
    </ScrollRow>
    <LayerPanel>
      <SideTitle $h={49} $drop={8}><Caret />层树</SideTitle>
      <LayerBar>
        <PickButton aria-label="选择"><Icon name="cursor" /></PickButton>
        <ModelPicker aria-haspopup="listbox"><Txt>TMYG_01.ASM (</Txt>顶层模型，活动的<Txt>)(</Txt>默认表示<Txt>)</Txt></ModelPicker>
      </LayerBar>
      <LayerList>
        <li><NodeCell $level={0} $gap={11} $h={26}><Icon name="layers" />层</NodeCell></li>
        {layers.map((l) => (
          <li key={l.label}>
            <NodeCell $level={1} $gap={10} $h={26}>
              <Twisty /><LayerIcon><Icon name={l.icon} /></LayerIcon><span><Txt>{l.label}</Txt></span>
            </NodeCell>
          </li>
        ))}
      </LayerList>
    </LayerPanel>
  </Side>
);

/* ---------- graphics area ---------- */

const View = styled.main`
  position: relative;
  display: flex;
  flex: 1;
  flex-direction: column;
  min-width: 0;
  padding-top: 8px;
  background: linear-gradient(#9b998b, #dfddd2);
`;
const ViewBar = styled.div`
  display: flex;
  flex: none;
  align-items: center;
  justify-content: flex-end;
  gap: 3px;
  height: 41px;
  padding-right: 9px;
  border: solid #aab0b2;
  border-width: 1px 0;
  background: #f9fafc;
`;
const ViewBtn = styled.button<{ $on?: boolean; $menu?: boolean }>`
  position: relative;
  display: grid;
  place-items: center;
  width: 33px;
  height: 33px;
  border: 1px solid ${(p) => (p.$on ? '#a8acaf' : 'transparent')};
  background: ${(p) => (p.$on ? '#dfe1e3' : 'transparent')};
  ${(p) => p.$menu && css`
    &::after {
      content: '';
      position: absolute;
      right: 2px;
      bottom: 1px;
      border-left: 4px solid transparent;
      border-bottom: 4px solid #777;
    }
  `}
`;
const Scene = styled.svg`
  position: absolute;
  right: 0;
  top: 159px;
`;
const Brand = styled.div`
  position: absolute;
  right: 18px;
  bottom: 8px;
  width: 170px;
`;
const BrandName = styled.div`
  display: flex;
  gap: 7px;
  font-size: 40px;
  line-height: 42px;
  font-style: italic;
  font-weight: 400;
  color: #111;
  b { font-weight: 400; color: #ff6633; }
`;
const BrandUrl = styled.div`
  padding-left: 4px;
  font: italic 15px/18px 'DejaVu Sans', sans-serif;
  color: #8f8f8f;
`;
const Flame = styled.svg`
  position: absolute;
  left: 66px;
  top: -16px;
`;

const viewTools: { icon: IconName; on?: boolean; menu?: boolean; big?: boolean }[] = [
  { icon: 'manageSmall' }, { icon: 'explode' }, { icon: 'cubeIn' }, { icon: 'cubeIn2' }, { icon: 'persp', big: true },
  { icon: 'sectionDash', menu: true }, { icon: 'datumFilter', menu: true }, { icon: 'planeEye', on: true },
  { icon: 'axisEye' }, { icon: 'pointsEye' }, { icon: 'csysEye' }, { icon: 'noteEye' }, { icon: 'spin' },
];

const tags: [string, number, number][] = [
  ['TOP', 64, 332], ['TOP', 106, 394], ['SIDE', 130, 549], ['FRONT', 862, 188], ['FRONT', 845, 244],
  ['FRONT', 1042, 255], ['ASM_TOP', 1172, 276], ['TOP', 832, 262], ['FRONT', 812, 290], ['FRONT', 908, 314],
  ['SIDE', 842, 404], ['TOP', 945, 380], ['TOP', 910, 402], ['SIDE', 1010, 382], ['FRONT', 1080, 398],
  ['ASM_FRONT', 1196, 400], ['TOP', 1328, 452], ['FRONT', 1150, 466], ['SIDE', 1000, 440],
  ['SIDE', 985, 472], ['FRONT', 1040, 472], ['SIDE', 946, 538], ['SIDE', 815, 602], ['FRONT', 855, 604], ['SIDE', 845, 664],
  ['SIDE', 930, 664], ['SIDE', 1052, 664], ['SIDE', 812, 732],
];

const Model = () => (
  <Scene width="488" height="300" viewBox="0 0 1464 900" role="img" aria-label="油缸装配模型">
    <defs>
      <linearGradient id="tube" x1="0" y1="305" x2="0" y2="720" gradientUnits="userSpaceOnUse">
        <stop offset="0" stopColor="#5e6a72" /><stop offset=".1" stopColor="#8595a0" /><stop offset=".32" stopColor="#a3b3be" />
        <stop offset=".55" stopColor="#8f9da7" /><stop offset=".78" stopColor="#6a767e" /><stop offset=".9" stopColor="#4d555a" />
        <stop offset=".94" stopColor="#434444" /><stop offset="1" stopColor="#4a4a47" />
      </linearGradient>
      <linearGradient id="lug" x1="1040" y1="680" x2="1430" y2="420" gradientUnits="userSpaceOnUse">
        <stop offset="0" stopColor="#4d565c" /><stop offset=".6" stopColor="#69737a" /><stop offset="1" stopColor="#454d52" />
      </linearGradient>
    </defs>
    <path d="M0 324L900 306L1120 303L1120 705L740 708L0 721Z" fill="url(#tube)" />
    <g stroke="#1c1f24" strokeWidth="3" strokeLinejoin="round" shapeRendering="crispEdges">
      <path d="M1003 430L1060 350L1100 306L1168 310L1020 600L1003 560Z" fill="#525c62" />
      <path d="M1335 355L1428 465C1436 550 1370 622 1280 655L1200 680Q1150 714 1070 690L1020 600L1210 555C1270 530 1320 490 1340 440Z" fill="url(#lug)" />
      <path d="M1168 310L1212 312L1330 355Q1345 375 1335 440C1310 495 1260 545 1210 555L1024 600Z" fill="#a1b0ba" />
      <ellipse cx="1232" cy="454" rx="50" ry="33" transform="rotate(-43 1232 454)" fill="#5f6a71" />
      <path d="M1207 555Q1260 600 1295 650M1020 600Q1060 590 1207 555M1060 690Q1140 690 1210 676" fill="none" />
      <ellipse cx="1112" cy="340" rx="26" ry="34" transform="rotate(20 1112 340)" fill="#8c9aa4" /><ellipse cx="1106" cy="340" rx="14" ry="24" fill="#57616a" />
      <ellipse cx="1022" cy="525" rx="22" ry="32" fill="#6b757c" />
      <path d="M905 420Q900 560 1040 706" fill="none" />
      <path d="M940 212H1015L1008 303H970Z" fill="#a1b0ba" /><path d="M1015 212L1075 230L1063 305H1008Z" fill="#4f585e" />
      <path d="M695 433L828 430L893 502H765Z" fill="#4e565b" />
      <path d="M613 383H783L828 430L660 433Z" fill="#596269" />
      <path d="M880 196L935 235L1000 300L1026 375L965 432L915 405L893 502L828 430L783 383Z" fill="#4a5258" />
      <path d="M712 196H880L783 383H613Z" fill="#a1b0ba" />
      {[[718, 214], [697, 251], [688, 271], [667, 310], [657, 330], [637, 369], [954, 230]].map(([x, y]) => (
        <ellipse key={`${x}-${y}`} cx={x} cy={y} rx="7" ry="6" transform={`rotate(-40 ${x} ${y})`} fill="#4a5258" />
      ))}
      <ellipse cx="878" cy="178" rx="22" ry="17" fill="#555e64" /><path d="M845 192L862 176L880 196Z" fill="#a1b0ba" />
      <ellipse cx="905" cy="332" rx="40" ry="42" fill="#7d8a93" /><ellipse cx="905" cy="332" rx="24" ry="26" fill="#4a5258" /><circle cx="903" cy="332" r="12" fill="#a1b0ba" />
      <path d="M800 504H820V560H785Z" fill="#7b868d" />
      <path d="M820 504L893 502L912 590L870 560H820Z" fill="#a1b0ba" stroke="none" />
      <path d="M737 605L790 560H868L810 603Z" fill="#8d9ba5" /><path d="M737 605L810 603L838 680H767Z" fill="#7f8c95" /><path d="M810 603L868 560L905 650L838 680Z" fill="#495157" />
      <path d="M28 305H70L133 368L110 428H28V360H46Z" fill="#4f585e" /><path d="M28 305H70L46 362H28Z" fill="#a1b0ba" />
      <ellipse cx="92" cy="363" rx="18" ry="24" fill="#8593a0" /><ellipse cx="92" cy="363" rx="9" ry="14" fill="#4a5258" /><circle cx="46" cy="381" r="6" fill="#333" />
    </g>
    <path d="M862 48L1040 226L1170 276L1222 342L978 796L945 868L616 517L790 190Z" fill="#b07530" opacity=".07" />
    <g fill="none" stroke="#b0742f" strokeWidth="3" shapeRendering="crispEdges">
      <path d="M862 48L616 517L945 868L1222 342M862 48L1040 226L1125 300L1255 625H1150L975 452" />
      <path d="M826 148L690 484L975 745L1124 300ZM975 184L745 545L955 630L1150 470ZM800 205L735 328L960 560L1090 350Z" />
      <path d="M0 292L456 282L1150 272L1464 265M0 288L700 278M0 358L240 356L640 346L820 340M0 390L480 378L850 374M0 412L560 406L1080 410M0 400L820 390" />
      <path d="M0 628L460 620L800 608L1255 625M0 648L300 644L800 634L1150 632L1464 628M0 655L640 646M0 686L560 674L960 660L1290 662M0 755L640 742L1257 733L1458 340L1222 342" />
      <path d="M303 356H120L0 520M335 642L120 412M160 490H248L218 548H130L160 490M303 356L135 682M30 445L55 445L30 520L150 640M0 572L52 572M30 520L60 455L92 395M26 530L105 625" />
      <path d="M1222 342L1060 650L978 796" strokeWidth="9" /><path d="M1170 276L1464 590M1150 470L1230 553H1375L1330 452H1150M1448 340L1290 655" />
      <path d="M978 796L690 484L826 148M940 790L735 620M1255 625L1190 560M790 300L900 420L1060 390M770 260L1000 500L830 640" />
      <path d="M700 380L880 190M712 390L890 210M745 545L930 220M760 545L945 235M820 690L1080 260M850 700L1110 290M900 690L1060 380M790 535L850 610M660 290L830 470M780 330L1000 560M830 250L1060 470M850 640L950 740M960 660L1060 540" />
      <path d="M760 340H850M800 278H1010M900 482H1060M790 600H990M820 636H1040M850 665L1130 668M812 733H895M905 310L1000 420L890 560L800 430Z" />
      <path d="M845 240L880 300M860 250L930 330M830 270L890 350M870 230L850 330M900 280L830 420M940 290L880 360M1000 410L1080 430M1010 470L1090 440M1020 400L990 470" />
      <circle cx="905" cy="330" r="30" /><path d="M880 300l50 60M930 300l-50 60" />
    </g>
    <g fill="#b0742f" fontFamily="'Liberation Mono', monospace" fontSize="36">
      {tags.map(([t, x, y], i) => <text key={i} x={x} y={y}>{t}</text>)}
    </g>
  </Scene>
);

const GraphicsView = () => (
  <View>
    <ViewBar>
      {viewTools.map((t) => (
        <ViewBtn key={t.icon} $on={t.on} $menu={t.menu} aria-label={t.icon} aria-pressed={!!t.on}>
          <Icon name={t.icon} grid={t.big ? 120 : 60} />
        </ViewBtn>
      ))}
    </ViewBar>
    <Model />
    <Brand>
      <BrandName><b>野火</b><span>论坛</span></BrandName>
      <BrandUrl>www.proewildfire.cn</BrandUrl>
      <Flame width="22" height="46" viewBox="285 48 66 138" aria-hidden="true">
        <path d="M305 50C338 76 352 112 337 145C330 160 318 172 306 174C298 172 290 164 292 158C308 150 312 138 306 112C302 96 298 84 291 74C306 84 316 100 321 122C328 96 320 72 305 50Z" fill="#ff6633" />
      </Flame>
    </Brand>
  </View>
);

/* ---------- dialog ---------- */

const Dialog = styled.section`
  position: absolute;
  top: 140px;
  bottom: 0;
  left: 343px;
  display: flex;
  flex-direction: column;
  width: 707px;
  border: solid #8e9294;
  border-width: 1px 1px 0;
  background: #eeeff1;
  box-shadow: 0 0 12px rgba(0, 0, 0, 0.45);
`;
const DialogHead = styled.header`
  display: flex;
  flex: none;
  align-items: center;
  height: 39px;
  padding: 0 14px 2px 28px;
  background: #d9dddd;
  border: 1px solid #eef0f1;
  border-bottom: 0;
  h2 { flex: 1; font-weight: 300; text-align: center; color: #111; }
`;
const CloseBtn = styled.button`
  width: 14px;
  height: 14px;
`;
const DialogBody = styled.div`
  display: flex;
  flex: 1;
  min-height: 0;
`;
const ShowColumn = styled.div`
  flex: none;
  width: 187px;
  padding: 19px 0 0 14px;
  border-right: 1px solid #adb1b3;
  h3 { margin-bottom: 4px; }
`;
const TypeColumn = styled.div`
  display: flex;
  flex: 1;
  flex-direction: column;
  padding: 19px 13px 20px 24px;
`;
const CheckRow = styled.label<{ $dim?: boolean }>`
  display: flex;
  align-items: center;
  gap: 13px;
  height: 30px;
  padding-left: 3px;
  color: ${(p) => (p.$dim ? '#9a9c9e' : '#26292b')};
`;
const Check = styled.input.attrs({ type: 'checkbox' })`
  appearance: none;
  flex: none;
  width: 15px;
  height: 15px;
  margin: 0;
  border: 1px solid #77797b;
  background: #fff;
  &:checked::before {
    content: '';
    display: block;
    width: 13px;
    height: 13px;
    background: #2c2c2c;
    clip-path: polygon(1px 6px, 3px 5px, 5px 8px, 10px 2px, 12px 3px, 6px 11px, 5px 11px);
  }
  &:disabled { border-color: #c9cbcc; background: #eeeff1; }
  &:disabled::before { background: #c3c5c6; }
`;
const Caption = styled.span`
  padding-bottom: 2px;
`;
const TabBox = styled.div`
  display: flex;
  flex: 1;
  flex-direction: column;
  margin-top: 13px;
  border: 1px solid #c4c8cb;
  background: #fbfbfb;
`;
const TabRow = styled.div`
  display: flex;
  flex: none;
  height: 28px;
  background: #eeeff1;
`;
const TypeTab = styled.button<{ $grow: number; $on?: boolean }>`
  flex: ${(p) => p.$grow} 1 0;
  text-align: center;
  color: ${(p) => (p.$on ? '#000' : '#5c5e61')};
  background: ${(p) => (p.$on ? '#fbfbfb' : 'transparent')};
  border-bottom: 1px solid ${(p) => (p.$on ? '#fbfbfb' : '#c4c8cb')};
  border-right: 1px solid #d3d6d9;
  &:last-child { border-right: 0; }
`;
const TypeLists = styled.div`
  display: flex;
  padding: 16px 0 0 16px;
`;
const TypeList = styled.div<{ $w: number; $drop?: boolean }>`
  width: ${(p) => p.$w}px;
  padding-top: ${(p) => (p.$drop ? 3 : 0)}px;
`;
const TypeRow = styled.label<{ $tall?: boolean }>`
  display: flex;
  align-items: center;
  height: 35px;
  margin-bottom: ${(p) => (p.$tall ? 5 : 0)}px;
  svg { margin: 0 8px 0 21px; }
`;
const Buttons = styled.div`
  display: flex;
  flex: none;
  gap: 5px;
  margin-top: 5px;
`;
const SquareBtn = styled.button`
  display: grid;
  place-items: center;
  width: 39px;
  height: 39px;
  border: 1px solid #acb0b2;
  background: #f7f7f8;
`;
const DialogFoot = styled.footer`
  flex: none;
  height: 3px;
  border-top: 1px solid #bfc4c9;
`;

const shown: [string, boolean, boolean?][] = [
  ['放置文件夹', false], ['材料', true], ['面组', true], ['主体', true], ['注释', true], ['自定义组', false],
  ['特征', true], ['截面', true], ['NC 所有者', true, true], ['模具/铸造所有者', true, true], ['隐含的对象', true],
  ['未完成的对象', true], ['排除的对象', true], ['遮蔽的对象', true], ['包络元件', false], ['复制的参考', true],
  ['实焊', true], ['仿真研究', true],
];
const datumTypes: [IconName, string, boolean, boolean][] = [
  ['planeS', '基准平面', true, true], ['axis', '基准轴', true, true], ['curve', '曲线', true, false],
  ['points', '基准点', true, false], ['csys', '坐标系', true, false], ['round', '倒圆角', true, false],
  ['round', '自动倒圆角成员', false, false], ['cosmetic', '修饰', true, false],
];

const TreeItemsDialog = () => (
  <Dialog role="dialog" aria-label="模型树项">
    <DialogHead>
      <h2>模型树项</h2>
      <CloseBtn aria-label="关闭">
        <svg width="14" height="14" viewBox="0 0 14 14"><path d="M3 3l8 8M11 3l-8 8" stroke="#666b6d" strokeWidth="3" /></svg>
      </CloseBtn>
    </DialogHead>
    <DialogBody>
      <ShowColumn>
        <h3>显示</h3>
        {shown.map(([label, on, dim]) => (
          <CheckRow key={label} $dim={dim}>
            <Check defaultChecked={on} disabled={dim} />
            <Caption><Txt>{label}</Txt></Caption>
          </CheckRow>
        ))}
      </ShowColumn>
      <TypeColumn>
        <h3>特征类型</h3>
        <TabBox>
          <TabRow>
            <TypeTab $grow={110}>机构</TypeTab>
            <TypeTab $grow={111}>仿真</TypeTab>
            <TypeTab $grow={149}><Txt>主体/面组</Txt></TypeTab>
            <TypeTab $grow={110}>材料</TypeTab>
          </TabRow>
          <TabRow>
            <TypeTab $grow={94} $on>常规</TypeTab>
            <TypeTab $grow={80}>缆</TypeTab>
            <TypeTab $grow={94}>管道</TypeTab>
            <TypeTab $grow={80}><Txt>NC</Txt></TypeTab>
            <TypeTab $grow={132}><Txt>模具/铸造</Txt></TypeTab>
          </TabRow>
          <TypeLists>
            <TypeList $w={252}>
              {datumTypes.map(([icon, label, on, tall]) => (
                <TypeRow key={label} $tall={tall}><Check defaultChecked={on} /><Icon name={icon} /><Caption>{label}</Caption></TypeRow>
              ))}
            </TypeList>
            <TypeList $w={200} $drop>
              <TypeRow $tall><Check defaultChecked /><Icon name="sketch" size={24} grid={72} /><Caption>草绘</Caption></TypeRow>
              <TypeRow $tall><Check defaultChecked /><Icon name="sketch" size={24} grid={72} /><Caption>使用的草绘</Caption></TypeRow>
            </TypeList>
          </TypeLists>
        </TabBox>
        <Buttons>
          <SquareBtn aria-label="全选"><Icon name="checkAll" size={26} grid={78} /></SquareBtn>
          <SquareBtn aria-label="全部清除"><Icon name="uncheckAll" size={26} grid={78} /></SquareBtn>
        </Buttons>
      </TypeColumn>
    </DialogBody>
    <DialogFoot />
  </Dialog>
);

const SharedPaints = () => (
  <svg width="0" height="0" aria-hidden="true">
    <radialGradient id="ball" cx=".7" cy=".28" r=".75">
      <stop offset="0" stopColor="#fff" /><stop offset=".35" stopColor="#b5b5b5" /><stop offset=".75" stopColor="#555" /><stop offset="1" stopColor="#3f3f3f" />
    </radialGradient>
  </svg>
);

export default function App() {
  return (
    <Shell>
      <GlobalStyle />
      <TopStrip />
      <TabBar>
        <RibbonTab $kind="file">文件</RibbonTab>
        <RibbonTab $kind="active">模型</RibbonTab>
        {['分析', '实时仿真', '注释', '人体模型', '工具', '视图', 'Framework', '应用程序'].map((t) => (
          <RibbonTab key={t}><Txt>{t}</Txt></RibbonTab>
        ))}
      </TabBar>
      <RibbonBar />
      <Body>
        <SidePanel />
        <GraphicsView />
      </Body>
      <TreeItemsDialog />
      <SharedPaints />
    </Shell>
  );
}
